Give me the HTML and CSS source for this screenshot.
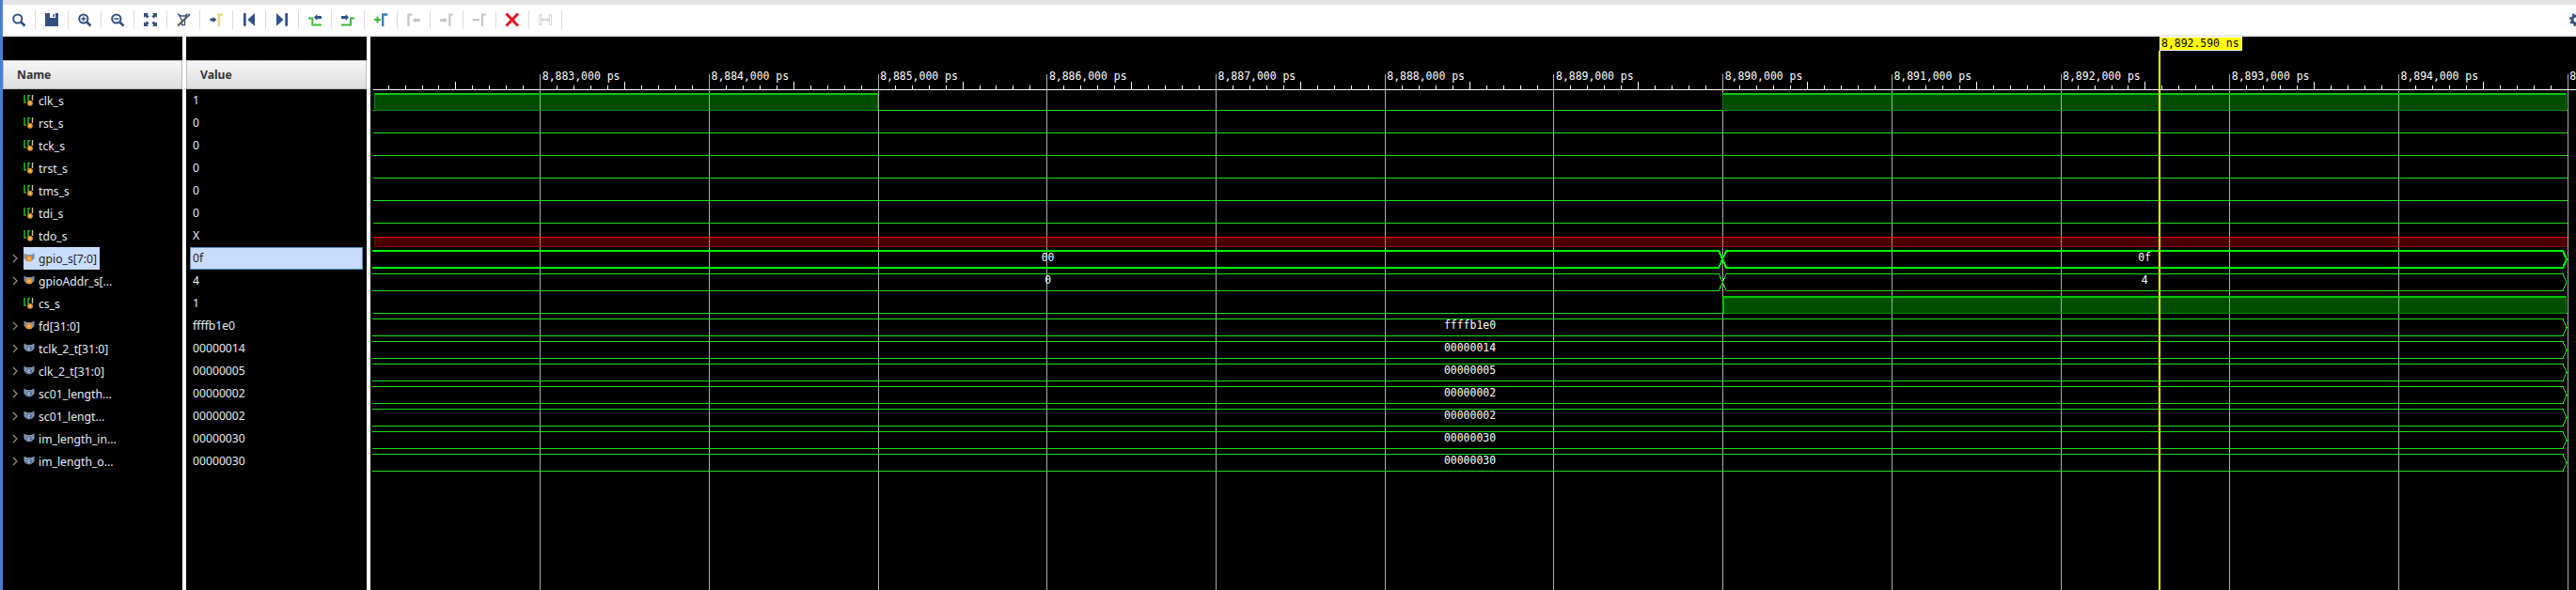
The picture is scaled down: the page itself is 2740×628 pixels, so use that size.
FILE: index.html
```html
<!DOCTYPE html>
<html lang="en">
<head>
    <meta charset="UTF-8">
    <title>Waveform</title>
    <link rel="stylesheet" href="styles.css">
</head>
<body>
    <!-- Icon sprite -->
    <svg class="sprite" xmlns="http://www.w3.org/2000/svg">
        <symbol id="i-search" viewBox="0 0 16 16"><circle cx="6.8" cy="7" r="4.6" fill="none" stroke="#35507f" stroke-width="2"/><path d="M10.3 10.5L14.5 14.5" stroke="#35507f" stroke-width="2.6"/></symbol>
        <symbol id="i-save" viewBox="0 0 16 16"><path d="M1 1h5v5h6V1h3v14H1z" fill="#35507f"/><path d="M9.5 2h1.5v3h-1.5z" fill="#35507f"/></symbol>
        <symbol id="i-zoom-in" viewBox="0 0 16 16"><circle cx="6.8" cy="7" r="4.6" fill="none" stroke="#35507f" stroke-width="2"/><path d="M10.3 10.5L14.5 14.5" stroke="#35507f" stroke-width="2.6"/><path d="M4.3 7h5M6.8 4.5v5" stroke="#35507f" stroke-width="1.4"/></symbol>
        <symbol id="i-zoom-out" viewBox="0 0 16 16"><circle cx="6.8" cy="7" r="4.6" fill="none" stroke="#35507f" stroke-width="2"/><path d="M10.3 10.5L14.5 14.5" stroke="#35507f" stroke-width="2.6"/><path d="M4.3 7h5" stroke="#35507f" stroke-width="1.6"/></symbol>
        <symbol id="i-fit" viewBox="0 0 16 16"><path d="M1 1h5L4.6 2.4l2 2-2.2 2.2-2-2L1 6zM15 1v5l-1.4-1.4-2 2-2.2-2.2 2-2L10 1zM1 15v-5l1.4 1.4 2-2 2.2 2.2-2 2L6 15zM15 15h-5l1.4-1.4-2-2 2.2-2.2 2 2L15 10z" fill="#35507f"/></symbol>
        <symbol id="i-no-cursor" viewBox="0 0 16 16"><path d="M3 2.5l3 1.5h3.5l2-1.5-2 6v5H6.5v-5z" fill="none" stroke="#35507f" stroke-width="1.3"/><path d="M15 2L2 14.5" stroke="#5c5c5c" stroke-width="2.2"/></symbol>
        <symbol id="i-add-marker" viewBox="0 0 16 16"><path d="M1.5 6.5h3V5l4 3-4 3V9.500h-3z" fill="#2f5188"/><path d="M10.800 15V2.500h4" fill="none" stroke="#f0d878" stroke-width="2.400"/></symbol>
        <symbol id="i-prev" viewBox="0 0 16 16"><path d="M2 1h2.700v13.700H2z" fill="#2f5188"/><path d="M14 1v13.700L6.300 8z" fill="#2f5188"/></symbol>
        <symbol id="i-next" viewBox="0 0 16 16"><path d="M2 1v13.700L9.500 8z" fill="#2f5188"/><path d="M11.300 1H14v13.700h-2.700z" fill="#2f5188"/></symbol>
        <symbol id="i-prev-edge" viewBox="0 0 16 16"><path d="M1 6.500h4.300v7H15" fill="none" stroke="#3cb83c" stroke-width="2"/><path d="M7 5.500l3.300-3.500V4H15v3h-4.700v2z" fill="#2f5188"/></symbol>
        <symbol id="i-next-edge" viewBox="0 0 16 16"><path d="M1 13.500h10v-7h4" fill="none" stroke="#3cb83c" stroke-width="2"/><path d="M1 4h4.700V2L9 5.500 5.700 9V7H1z" fill="#2f5188"/></symbol>
        <symbol id="i-add" viewBox="0 0 16 16"><path d="M1 8h7M4.500 4.500v7" stroke="#3cb83c" stroke-width="2"/><path d="M10.200 15V2.500h5" fill="none" stroke="#2f80b8" stroke-width="2.300"/></symbol>
        <symbol id="i-gray-prev" viewBox="0 0 16 16"><path d="M2.500 15V2.500h4" fill="none" stroke="#c4c4c4" stroke-width="2.200"/><path d="M7 8.500l3-3V7h4.700v3H10v1.500z" fill="#c4c4c4"/></symbol>
        <symbol id="i-gray-next" viewBox="0 0 16 16"><path d="M1.300 7h4V5.500l3.400 3-3.400 3V10h-4z" fill="#c4c4c4"/><path d="M11.300 15V2.500h3.400" fill="none" stroke="#c4c4c4" stroke-width="2"/></symbol>
        <symbol id="i-gray-remove" viewBox="0 0 16 16"><path d="M.7 8H8" stroke="#c4c4c4" stroke-width="2"/><path d="M10.900 15V2.500h3.800" fill="none" stroke="#c4c4c4" stroke-width="2.200"/></symbol>
        <symbol id="i-remove" viewBox="0 0 16 16"><path d="M1.500 1.500l12.500 13M14 1.500L1.500 14.500" stroke="#e8101c" stroke-width="3"/></symbol>
        <symbol id="i-span" viewBox="0 0 16 16"><path d="M1.800 2.500h2v11h-2zM12.300 2.500h2v11h-2z" fill="none" stroke="#cfcfcf"/><path d="M4.500 8h7M6 6.500L4.500 8 6 9.500M10 6.500L11.500 8 10 9.500" fill="none" stroke="#bdbdbd"/></symbol>
        <symbol id="i-gear" viewBox="0 0 14 14"><circle cx="7" cy="7" r="4" fill="none" stroke="#35507f" stroke-width="3"/><circle cx="7" cy="7" r="6" fill="none" stroke="#35507f" stroke-width="2" stroke-dasharray="2.400 2.300"/></symbol>
        <symbol id="i-chevron" viewBox="0 0 6 10"><path d="M1 1l4 4-4 4" fill="none" stroke="#8a8a8a" stroke-width="1.300"/></symbol>
        <symbol id="s-bit" viewBox="0 0 12 12"><path d="M1 0v8h2" fill="none" stroke="#2fb52f" stroke-width="1.500"/><path d="M5 7V.7h2" fill="none" stroke="#2fb52f" stroke-width="1.500"/><path d="M9.500 0v6" stroke="#c9c294" stroke-width="1.400"/><circle cx="7" cy="8.800" r="2.900" fill="#f0952a"/><circle cx="7" cy="8.800" r="1" fill="#ffd28a"/></symbol>
        <symbol id="s-bus" viewBox="0 0 12 12"><path d="M.5 .5l3 1.500h5l3-1.500V6l-3 3h-5l-3-3z" fill="#7d8ea3"/><circle cx="6" cy="6.300" r="3.200" fill="#f0952a"/><circle cx="6" cy="6.300" r="1" fill="#ffd28a"/></symbol>
        <symbol id="s-const" viewBox="0 0 12 12"><path d="M.5 .5l3 1.500h5l3-1.500V6l-3 3h-5l-3-3z" fill="#8496ab"/><circle cx="6" cy="6.300" r="3.200" fill="#55709e"/><path d="M7 5.300a1.400 1.400 0 1 0 0 2" fill="none" stroke="#d6deea"/></symbol>
    </svg>

    <div class="side-strip"></div>

    <div class="app">
        <div class="top-strip"></div>

        <!-- Toolbar -->
        <div class="toolbar">
            <span class="tool"><svg class="icon"><use href="#i-search"/></svg></span>
            <span class="tool"><svg class="icon"><use href="#i-save"/></svg></span>
            <span class="tool"><svg class="icon"><use href="#i-zoom-in"/></svg></span>
            <span class="tool"><svg class="icon"><use href="#i-zoom-out"/></svg></span>
            <span class="tool"><svg class="icon"><use href="#i-fit"/></svg></span>
            <span class="tool"><svg class="icon"><use href="#i-no-cursor"/></svg></span>
            <span class="tool"><svg class="icon"><use href="#i-add-marker"/></svg></span>
            <span class="tool"><svg class="icon"><use href="#i-prev"/></svg></span>
            <span class="tool"><svg class="icon"><use href="#i-next"/></svg></span>
            <span class="tool"><svg class="icon"><use href="#i-prev-edge"/></svg></span>
            <span class="tool"><svg class="icon"><use href="#i-next-edge"/></svg></span>
            <span class="tool"><svg class="icon"><use href="#i-add"/></svg></span>
            <span class="tool"><svg class="icon"><use href="#i-gray-prev"/></svg></span>
            <span class="tool"><svg class="icon"><use href="#i-gray-next"/></svg></span>
            <span class="tool"><svg class="icon"><use href="#i-gray-remove"/></svg></span>
            <span class="tool"><svg class="icon"><use href="#i-remove"/></svg></span>
            <span class="tool"><svg class="icon"><use href="#i-span"/></svg></span>
            <span class="gear"><svg class="gear-icon"><use href="#i-gear"/></svg></span>
        </div>

        <div class="main">
            <!-- Signal names -->
            <div class="panel names">
                <div class="column-head">Name</div>
                <div class="name-row"><span class="chevron"></span><span class="signal"><svg class="signal-icon"><use href="#s-bit"/></svg>clk_s</span></div>
                <div class="name-row"><span class="chevron"></span><span class="signal"><svg class="signal-icon"><use href="#s-bit"/></svg>rst_s</span></div>
                <div class="name-row"><span class="chevron"></span><span class="signal"><svg class="signal-icon"><use href="#s-bit"/></svg>tck_s</span></div>
                <div class="name-row"><span class="chevron"></span><span class="signal"><svg class="signal-icon"><use href="#s-bit"/></svg>trst_s</span></div>
                <div class="name-row"><span class="chevron"></span><span class="signal"><svg class="signal-icon"><use href="#s-bit"/></svg>tms_s</span></div>
                <div class="name-row"><span class="chevron"></span><span class="signal"><svg class="signal-icon"><use href="#s-bit"/></svg>tdi_s</span></div>
                <div class="name-row"><span class="chevron"></span><span class="signal"><svg class="signal-icon"><use href="#s-bit"/></svg>tdo_s</span></div>
                <div class="name-row"><svg class="chevron"><use href="#i-chevron"/></svg><span class="signal selected"><svg class="signal-icon"><use href="#s-bus"/></svg>gpio_s[7:0]</span></div>
                <div class="name-row"><svg class="chevron"><use href="#i-chevron"/></svg><span class="signal"><svg class="signal-icon"><use href="#s-bus"/></svg>gpioAddr_s[...</span></div>
                <div class="name-row"><span class="chevron"></span><span class="signal"><svg class="signal-icon"><use href="#s-bit"/></svg>cs_s</span></div>
                <div class="name-row"><svg class="chevron"><use href="#i-chevron"/></svg><span class="signal"><svg class="signal-icon"><use href="#s-bus"/></svg>fd[31:0]</span></div>
                <div class="name-row"><svg class="chevron"><use href="#i-chevron"/></svg><span class="signal"><svg class="signal-icon"><use href="#s-const"/></svg>tclk_2_t[31:0]</span></div>
                <div class="name-row"><svg class="chevron"><use href="#i-chevron"/></svg><span class="signal"><svg class="signal-icon"><use href="#s-const"/></svg>clk_2_t[31:0]</span></div>
                <div class="name-row"><svg class="chevron"><use href="#i-chevron"/></svg><span class="signal"><svg class="signal-icon"><use href="#s-const"/></svg>sc01_length...</span></div>
                <div class="name-row"><svg class="chevron"><use href="#i-chevron"/></svg><span class="signal"><svg class="signal-icon"><use href="#s-const"/></svg>sc01_lengt...</span></div>
                <div class="name-row"><svg class="chevron"><use href="#i-chevron"/></svg><span class="signal"><svg class="signal-icon"><use href="#s-const"/></svg>im_length_in...</span></div>
                <div class="name-row"><svg class="chevron"><use href="#i-chevron"/></svg><span class="signal"><svg class="signal-icon"><use href="#s-const"/></svg>im_length_o...</span></div>
            </div>

            <!-- Signal values -->
            <div class="panel values">
                <div class="column-head">Value</div>
                <div class="value-row">1</div>
                <div class="value-row">0</div>
                <div class="value-row">0</div>
                <div class="value-row">0</div>
                <div class="value-row">0</div>
                <div class="value-row">0</div>
                <div class="value-row">X</div>
                <div class="value-row selected">0f</div>
                <div class="value-row">4</div>
                <div class="value-row">1</div>
                <div class="value-row">ffffb1e0</div>
                <div class="value-row">00000014</div>
                <div class="value-row">00000005</div>
                <div class="value-row">00000002</div>
                <div class="value-row">00000002</div>
                <div class="value-row">00000030</div>
                <div class="value-row">00000030</div>
            </div>

            <!-- Waveform canvas, filled in by waves.js -->
            <div class="panel wave-panel">
                <svg id="waves" class="waves" viewBox="394 39 2346 589" xmlns="http://www.w3.org/2000/svg"></svg>
            </div>
        </div>
    </div>

    <script src="waves.js"></script>
</body>
</html>
```

FILE: styles.css
```css
/* General page styles */
html, body {
    margin: 0;
    height: 100%;
}

body {
    display: flex;
    height: 628px;
    overflow: hidden;
    background-color: #fff;
    font-family: "Noto Sans", "Open Sans", sans-serif;
    font-size: 12.2px;
}

.sprite {
    display: none;
}

.side-strip {
    flex: 0 0 3px;
    background-color: #4a7ed6;
}

.app {
    flex: 1;
    min-width: 0;
    display: flex;
    flex-direction: column;
}

.top-strip {
    height: 5px;
    background-color: #e4e4e4;
}

/* Toolbar */
.toolbar {
    height: 32px;
    display: flex;
    align-items: center;
    background-color: #fff;
    border-bottom: 2px solid #ececec;
}

.tool {
    box-sizing: content-box;
    width: 34px;
    height: 20px;
    display: flex;
    align-items: center;
    justify-content: center;
    border-right: 1px solid #dcdcdc;
}

.icon {
    width: 16px;
    height: 16px;
    flex: none;
}

.gear {
    margin-left: auto;
    width: 7px;
    height: 14px;
    overflow: hidden;
}

.gear-icon {
    display: block;
    width: 14px;
    height: 14px;
}

/* Panels */
.main {
    flex: 1;
    min-height: 0;
    display: flex;
    gap: 4px;
}

.panel {
    background-color: #000;
}

.names {
    width: 191px;
    padding-top: 25px;
}

.values {
    width: 192px;
    padding-top: 25px;
}

.wave-panel {
    flex: 1;
    min-width: 0;
}

.waves {
    display: block;
    width: 2346px;
    height: 589px;
}

.column-head {
    box-sizing: border-box;
    height: 31px;
    line-height: 29px;
    border: 1px solid #bdbdbd;
    background: linear-gradient(#f6f6f6, #dedede);
    color: #333;
    font-weight: bold;
}

.names .column-head {
    padding-left: 14px;
}

.values .column-head {
    padding-left: 14px;
}

/* Rows */
.name-row {
    height: 24px;
    display: flex;
    align-items: stretch;
    padding-left: 10px;
    color: #e6edf7;
}

.chevron {
    flex: none;
    width: 6px;
    height: 10px;
    margin: 7px 6px 0 0;
}

.signal {
    display: flex;
    align-items: center;
    gap: 4px;
    padding-right: 3px;
    white-space: nowrap;
}

.signal.selected {
    background-color: #c8dcfb;
    color: #222;
}

.signal-icon {
    width: 12px;
    height: 12px;
    flex: none;
}

.value-row {
    box-sizing: border-box;
    height: 24px;
    line-height: 22px;
    margin: 0 4px;
    padding-left: 2px;
    border: 1px solid transparent;
    color: #e6edf7;
}

.value-row.selected {
    background-color: #c8dcfb;
    border-color: #4a90c8;
    color: #222;
}

/* Waveform */
.ruler-label,
.bus-label,
.cursor-label {
    font-family: "DejaVu Sans Mono", "Liberation Mono", monospace;
    font-size: 11.45px;
}

.ruler-label,
.bus-label {
    fill: #fff;
}

.cursor-label {
    fill: #000;
}
```

FILE: waves.js
```js
const svg = document.getElementById('waves');
const NS = 'http://www.w3.org/2000/svg';

const X0 = 397;
const X1 = 2730;
const GRID0 = 574.3;
const GRID_STEP = 179.7;
const EDGE = GRID0 + 7 * GRID_STEP;
const CURSOR = 2297;

const LINE = '#1ee01e';
const DARK = '#008400';

function add(tag, attrs, text) {
    const el = document.createElementNS(NS, tag);
    for (const key in attrs) {
        el.setAttribute(key, attrs[key]);
    }
    if (text) el.textContent = text;
    svg.appendChild(el);
    return el;
}

function rect(x, y, width, height, fill) {
    add('rect', { x: Math.round(x), y, width: Math.round(width), height, fill, 'shape-rendering': 'crispEdges' });
}

function rowTop(i) {
    return 99 + 24 * i;
}

function drawRuler() {
    rect(X0, 95, 2740 - X0, 1, '#fff');
    for (let n = -10; n < 140; n++) {
        const x = GRID0 + n * GRID_STEP / 10;
        if (x < X0 + 10 || x > 2740) continue;
        if (n % 10 === 0) continue;
        const h = n % 5 === 0 ? 8 : 4;
        rect(x, 95 - h, 1, h, '#fff');
    }
    for (let i = 0; i < 13; i++) {
        const x = GRID0 + i * GRID_STEP;
        rect(x, 79, 1, 549, '#aeaeae');
        const label = '8,' + (883 + i) + ',000 ps';
        add('text', { x: x + 2.5, y: 85, class: 'ruler-label' }, label);
    }
}

// one bit signal, high between the given x pairs
function bit(i, highs) {
    const top = rowTop(i);
    rect(X0, top + 18, X1 - X0 + 1, 1, LINE);
    highs.forEach(([a, b]) => {
        rect(a, top + 1, b - a, 17, 'rgba(0, 255, 0, 0.3)');
        rect(a, top + 18, b - a, 1, DARK);
        rect(a, top, b - a, 2, '#00c800');
        rect(a, top, i === 9 ? 2 : 1, 19, i === 9 ? '#00c800' : DARK);
        rect(b - 1, top, 1, 19, DARK);
    });
}

function unknown(i) {
    const top = rowTop(i) + 9;
    rect(X0 + 1, top, X1 - X0, 10, 'rgba(255, 0, 0, 0.3)');
    rect(X0 + 1, top, 1, 10, '#800000');
    rect(X0 + 1, top + 10, X1 - X0, 1, '#800000');
    rect(X0, top, X1 - X0 + 1, 1, '#ff0000');
}

// bus signal, segments split at the given x positions
function bus(i, labels, split, selected) {
    const top = rowTop(i);
    const y1 = selected ? top : top + 0.5;
    const y2 = y1 + 18;
    const mid = y1 + 9;
    const stroke = selected ? '#00ff00' : LINE;
    const width = selected ? 2 : 1;
    let a = `M${X0 - 1} ${y1}`;
    let b = `M${X0 - 1} ${y2}`;
    if (split) {
        a += `H${split - 4}L${split + 4} ${y2}`;
        b += `H${split - 4}L${split + 4} ${y1}`;
        add('path', { d: `${a}H${X1 - 4}L${X1} ${mid}`, fill: 'none', stroke, 'stroke-width': width, 'shape-rendering': 'crispEdges' });
        add('path', { d: `${b}H${X1 - 4}L${X1} ${mid}`, fill: 'none', stroke, 'stroke-width': width, 'shape-rendering': 'crispEdges' });
    } else {
        add('path', { d: `${a}H${X1 - 4}L${X1} ${mid}L${X1 - 4} ${y2}H${X0 - 1}`, fill: 'none', stroke, 'stroke-width': width, 'shape-rendering': 'crispEdges' });
    }
    const stops = split ? [X0, split, X1] : [X0, X1];
    labels.forEach((text, n) => {
        add('text', { x: (stops[n] + stops[n + 1]) / 2, y: top + 11, 'text-anchor': 'middle', class: 'bus-label' }, text);
    });
}

function drawCursor() {
    rect(CURSOR - 1, 54, 2, 574, '#ffff00');
    rect(CURSOR, 39, 88, 15, '#fff');
    rect(CURSOR + 1, 40, 86, 13, '#ffff00');
    add('text', { x: CURSOR + 2, y: 50, class: 'cursor-label' }, '8,892.590 ns');
}

drawRuler();

bit(0, [[X0 + 1, GRID0 + 2 * GRID_STEP], [EDGE, X1]]);
for (let i = 1; i <= 5; i++) bit(i, []);
unknown(6);
bus(7, ['00', '0f'], EDGE, true);
bus(8, ['0', '4'], EDGE);
bit(9, [[EDGE, X1]]);
['ffffb1e0', '00000014', '00000005', '00000002', '00000002', '00000030', '00000030'].forEach((value, n) => {
    bus(10 + n, [value]);
});

drawCursor();
```
